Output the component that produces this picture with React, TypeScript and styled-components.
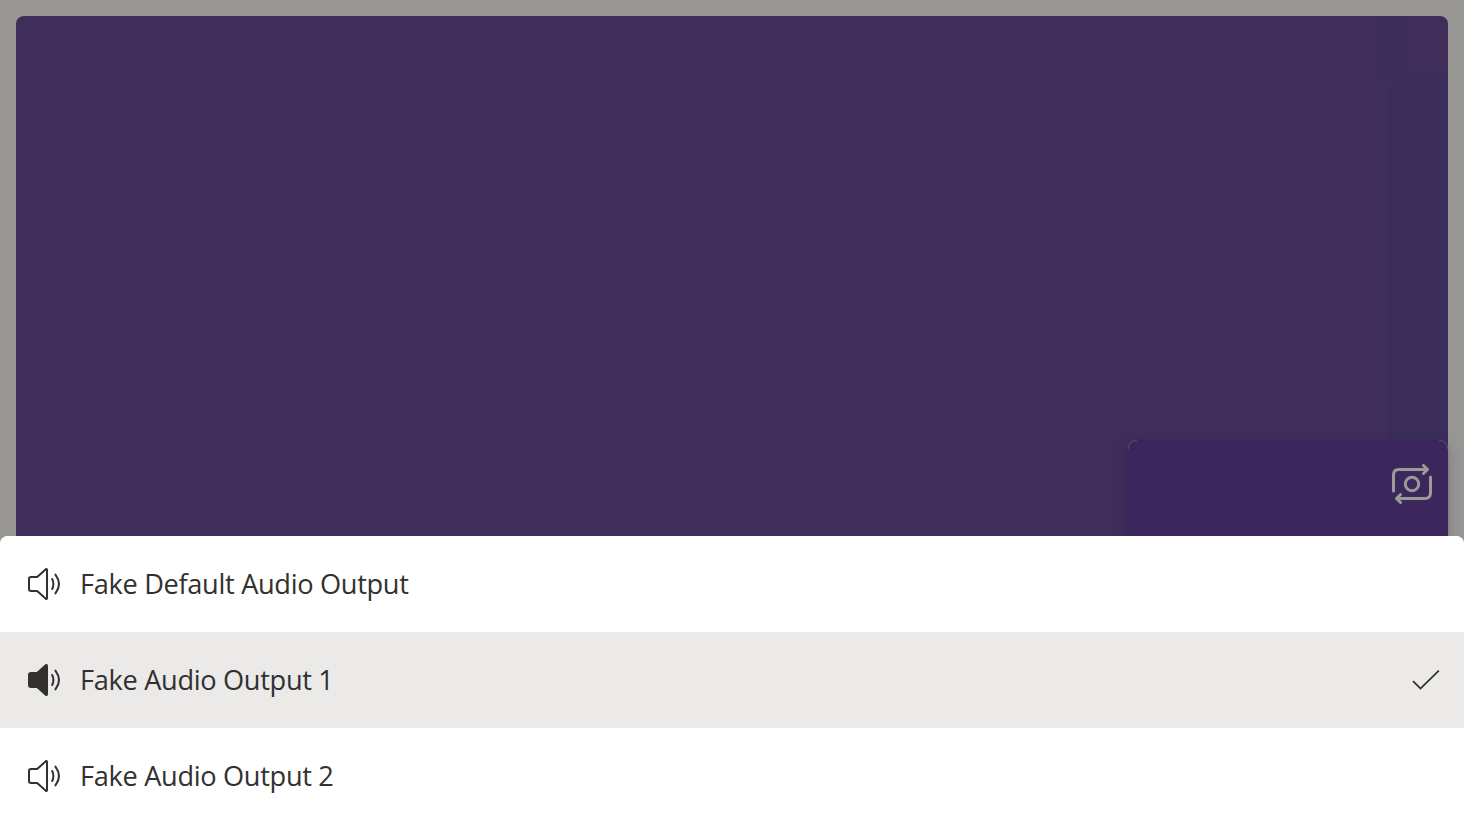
import React from "react";
import styled, { createGlobalStyle } from "styled-components";

const GlobalStyle = createGlobalStyle`
  * { box-sizing: border-box; }
  html, body { margin: 0; height: 100%; overflow: hidden; }
  body { font-family: "Open Sans", "Noto Sans", sans-serif; color: #323130; }
`;

const Screen = styled.main`
  position: relative;
  display: flex;
  height: 824px;
  padding: 16px;
  overflow: hidden;
  background: #979693;
`;

const RemoteVideo = styled.section`
  position: relative;
  flex: 1;
  border-radius: 8px;
  background: #3f2d5a;
`;

const SideShade = styled.div`
  position: absolute;
  top: 62px;
  right: 0;
  width: 61px;
  height: 380px;
  border-top-left-radius: 20px;
  background: #3a2d59;
`;

const UpperShade = styled.div`
  position: absolute;
  top: 0;
  right: 44px;
  width: 26px;
  height: 64px;
  background: #3c2d5a;
`;

const LocalVideo = styled.section`
  position: absolute;
  top: 424px;
  right: 0;
  display: flex;
  justify-content: flex-end;
  align-items: flex-start;
  width: 320px;
  height: 352px;
  padding: 24px 16px;
  border-radius: 8px;
  background: #3b275b;
  box-shadow: 0 6px 14px rgba(35, 43, 75, 0.24), 0 1px 3px rgba(35, 43, 75, 0.16);

  &::before,
  &::after {
    content: "";
    position: absolute;
    top: 0;
    width: 8px;
    height: 8px;
    border-top: 1px solid rgba(151, 150, 147, 0.3);
  }
  &::before {
    left: 0;
    border-left: 1px solid rgba(151, 150, 147, 0.3);
    border-top-left-radius: 8px;
  }
  &::after {
    right: 0;
    border-right: 1px solid rgba(151, 150, 147, 0.3);
    border-top-right-radius: 8px;
  }
`;

const CameraButton = styled.button`
  display: flex;
  padding: 0;
  border: 0;
  background: none;
  color: #9b9a98;
`;

const DeviceSheet = styled.ul`
  position: absolute;
  right: 0;
  bottom: 0;
  left: 0;
  margin: 0;
  padding: 0;
  overflow: hidden;
  border-radius: 8px 8px 0 0;
  background: #fff;
  list-style: none;
`;

const DeviceRow = styled.li<{ $selected?: boolean }>`
  display: flex;
  align-items: center;
  height: 96px;
  padding: 0 24px;
  background: ${({ $selected }) => ($selected ? "#ebeae8" : "#fff")};
`;

const DeviceName = styled.span`
  flex: 1;
  margin-left: 16px;
  font-size: 27.2px;
  font-weight: 380;
  line-height: 40px;
  letter-spacing: -0.32px;
  white-space: nowrap;
`;

const Icon = styled.svg`
  display: block;
  flex: none;
  fill: none;
  stroke: currentColor;
  stroke-linecap: round;
  stroke-linejoin: round;
`;

function SpeakerIcon({ filled }: { filled?: boolean }) {
  return (
    <Icon width="40" height="40" viewBox="0 0 40 40" strokeWidth="2">
      <path
        d="M7 13H13.2L21.8 5.2Q23 4.4 23 6V34Q23 35.6 21.8 34.8L13.2 27H7Q5 27 5 25V15Q5 13 7 13Z"
        fill={filled ? "currentColor" : "none"}
      />
      <path d="M28.2 15Q30.6 20 28.2 25M31.4 10.6Q38.6 20 31.4 29.4" />
    </Icon>
  );
}

function SwitchCameraIcon() {
  return (
    <Icon width="40" height="40" viewBox="0 0 40 40" strokeWidth="3">
      <path d="M1.5 27V11Q1.5 5.5 7 5.5H35M31.5 1.5L35.5 5.5L31.5 9.5M38.5 13V29Q38.5 34.5 33 34.5H5M8.5 30.5L4.5 34.5L8.5 38.5" />
      <circle cx="20" cy="20" r="6.7" />
    </Icon>
  );
}

function CheckIcon() {
  return (
    <Icon width="28" height="28" viewBox="0 0 28 28" strokeWidth="1.8">
      <path d="M1 15.2L8.5 22.6L26.8 4.6" strokeLinecap="butt" strokeLinejoin="miter" />
    </Icon>
  );
}

const devices = [
  { name: "Fake Default Audio Output", selected: false },
  { name: "Fake Audio Output 1", selected: true },
  { name: "Fake Audio Output 2", selected: false },
];

export default function App() {
  return (
    <>
      <GlobalStyle />
      <Screen>
        <RemoteVideo>
          <UpperShade />
          <SideShade />
          <LocalVideo>
            <CameraButton aria-label="Switch camera">
              <SwitchCameraIcon />
            </CameraButton>
          </LocalVideo>
        </RemoteVideo>
        <DeviceSheet>
          {devices.map(({ name, selected }) => (
            <DeviceRow key={name} $selected={selected}>
              <SpeakerIcon filled={selected} />
              <DeviceName>{name}</DeviceName>
              {selected && <CheckIcon />}
            </DeviceRow>
          ))}
        </DeviceSheet>
      </Screen>
    </>
  );
}
